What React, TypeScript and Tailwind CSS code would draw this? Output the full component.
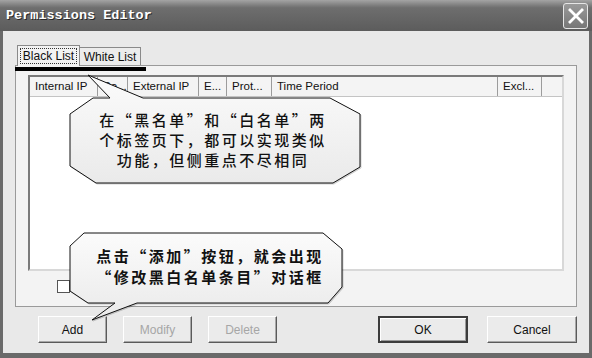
import React from 'react';

const cjk = '"Noto Sans CJK SC", "Noto Sans CJK JP", sans-serif';

const columns: { label: string; width: number }[] = [
  { label: 'Internal IP', width: 68 },
  { label: 'Po...', width: 30 },
  { label: 'External IP', width: 71 },
  { label: 'E...', width: 28 },
  { label: 'Prot...', width: 45 },
  { label: 'Time Period', width: 226 },
  { label: 'Excl...', width: 44 },
];

function Button({ label, disabled, primary, width }: { label: string; disabled?: boolean; primary?: boolean; width: number }) {
  return (
    <div
      className={
        'h-[27px] flex items-center justify-center text-[12px] bg-[#ebebeb] ' +
        (primary
          ? 'border-2 border-[#3c3c3c] shadow-[inset_1px_1px_0_#ffffff,inset_-1px_-1px_0_#9a9a9a]'
          : 'border border-t-white border-l-white border-r-[#5a5a5a] border-b-[#5a5a5a] shadow-[inset_-1px_-1px_0_#a8a8a8]') +
        (disabled ? ' text-[#a6a6a6]' : ' text-[#111]')
      }
      style={{ width }}
    >
      {label}
    </div>
  );
}

function Callout({
  left,
  top,
  width,
  height,
  points,
  lines,
  textLeft,
  textTop,
  textWidth,
  lineHeight,
  weight,
}: {
  left: number;
  top: number;
  width: number;
  height: number;
  points: string;
  lines: string[];
  textLeft: number;
  textTop: number;
  textWidth: number;
  lineHeight: number;
  weight: string;
}) {
  return (
    <div className="absolute" style={{ left, top, width, height }}>
      <svg width={width} height={height} className="absolute inset-0 overflow-visible drop-shadow-[1px_1px_0_rgba(0,0,0,0.18)]">
        <defs>
          <linearGradient id={`g${top}`} x1="0" y1="0" x2="0" y2="1">
            <stop offset="0" stopColor="#fbfbfb" />
            <stop offset="1" stopColor="#eaeaea" />
          </linearGradient>
        </defs>
        <polygon points={points} fill={`url(#g${top})`} stroke="#111" strokeWidth="1" strokeLinejoin="miter" />
      </svg>
      <div
        className={'absolute text-center text-[15px] tracking-[2.5px] text-[#111] ' + weight}
        style={{ left: textLeft, top: textTop, width: textWidth, lineHeight: `${lineHeight}px`, fontFamily: cjk }}
      >
        {lines.map((l, i) => (
          <div key={i} className="whitespace-nowrap">{l}</div>
        ))}
      </div>
    </div>
  );
}

export default function App() {
  return (
    <div className="relative w-[592px] h-[358px] overflow-hidden flex flex-col bg-[#e9e9e9]" style={{ fontFamily: '"Liberation Sans", Arial, sans-serif' }}>
      {/* Title bar */}
      <div className="h-[31px] flex items-center justify-between pl-[6px] pr-[4px] bg-linear-to-b from-[#a4a4a4] via-[#6e6e6e] via-25% to-[#5c5c5c]">
        <span
          className="text-white font-bold text-[13.5px] pt-[2px] [text-shadow:1px_1px_0_#2a2a2a]"
          style={{ fontFamily: '"Liberation Mono", "Courier New", monospace' }}
        >
          Permissions Editor
        </span>
        <div className="w-[25px] h-[26px] rounded-[3px] border border-[#e6e6e6] bg-linear-to-b from-[#9a9a9a] to-[#777] flex items-center justify-center">
          <svg width="16" height="16" viewBox="0 0 16 16">
            <path d="M2 2 L14 14 M14 2 L2 14" stroke="#fff" strokeWidth="2.8" strokeLinecap="square" />
          </svg>
        </div>
      </div>

      {/* Body */}
      <div className="flex-1 flex flex-col border-l-[3px] border-r-[3px] border-b-[5px] border-[#6a6a6a] px-[12px]">
        {/* Tabs */}
        <div className="relative z-10 mt-[14px] -mb-px h-[21px] flex items-start pl-[2px] text-[12px] text-[#111]">
          <div className="h-[21px] w-[63px] border border-b-0 border-[#8a8a8a] bg-[#f3f3f3] flex items-start justify-center pt-[2px]">
            <span className="border border-dotted border-[#333] px-[2px] leading-[14px]">Black List</span>
          </div>
          <div className="mt-[2px] h-[18px] w-[61px] border border-l-0 border-b-0 border-[#8a8a8a] bg-[#ececec] flex items-center justify-center">
            White List
          </div>
        </div>

        {/* Panel */}
        <div className="relative border border-[#9a9a9a] bg-[#f3f3f3] pl-[12px] pr-[12px] pt-[9px] pb-[13px]">
          <div className="absolute top-[1px] left-[-1px] w-[131px] h-[4px] bg-black z-20" />
          {/* List view */}
          <div className="h-[196px] bg-white border-2 border-t-[#7a7a7a] border-l-[#7a7a7a] border-r-[#d8d8d8] border-b-[#d8d8d8]">
            <div className="h-[20px] flex bg-[#f4f4f4] border-b border-[#c4c4c4] text-[11.5px] text-[#111]">
              {columns.map((c) => (
                <div key={c.label} className="h-full flex items-center pl-[5px] border-r border-[#9c9c9c] overflow-hidden whitespace-nowrap" style={{ width: c.width }}>
                  {c.label}
                </div>
              ))}
              <div className="flex-1" />
            </div>
          </div>
          <div className="mt-[9px] ml-[29px] w-[13px] h-[13px] border border-[#555] bg-white" />
        </div>

        {/* Buttons */}
        <div className="mt-[9px] h-[27px] flex items-center pl-[23px]">
          <div className="flex gap-[16px]">
            <Button label="Add" width={69} />
            <Button label="Modify" width={69} disabled />
            <Button label="Delete" width={69} disabled />
          </div>
          <div className="ml-auto flex gap-[19px]">
            <Button label="OK" width={90} primary />
            <Button label="Cancel" width={90} />
          </div>
        </div>
      </div>

      {/* Annotations */}
      <Callout
        left={70}
        top={75}
        width={290}
        height={108}
        points="18,0 73,23 260,23 290,39 290,92 263,108 26,108 0,91 0,39 23,23 40,23"
        lines={['在“黑名单”和“白名单”两', '个标签页下，都可以实现类似', '功能，但侧重点不尽相同']}
        textLeft={27}
        textTop={35}
        textWidth={232}
        lineHeight={20}
        weight="font-medium"
      />
      <Callout
        left={70}
        top={233}
        width={272}
        height={87}
        points="14,0 253,0 272,16 272,54 258,70 67,70 22,87 45,70 18,70 0,58 0,13"
        lines={['点击“添加”按钮，就会出现', '“修改黑白名单条目”对话框']}
        textLeft={25}
        textTop={12}
        textWidth={230}
        lineHeight={21}
        weight="font-bold"
      />
    </div>
  );
}
